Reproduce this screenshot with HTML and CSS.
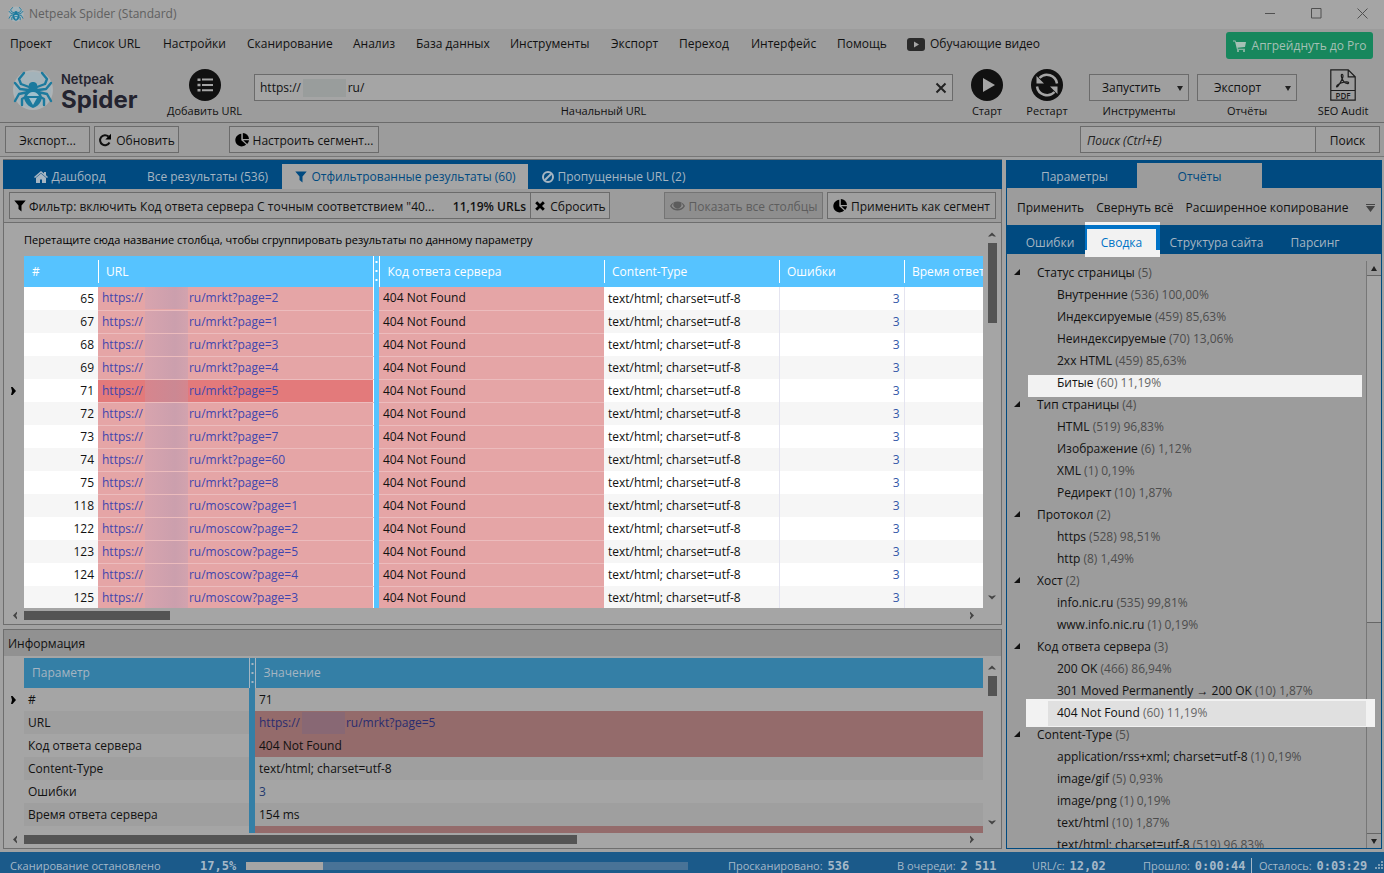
FILE: index.html
```html
<!DOCTYPE html>
<html lang="ru">
<head>
<meta charset="utf-8">
<title>Netpeak Spider (Standard)</title>
<link rel="stylesheet" href="styles.css">
</head>
<body>
<svg width="0" height="0" class="defs" aria-hidden="true">
  <symbol id="spider" viewBox="0 0 42 42">
    <circle cx="21" cy="21" r="20" fill="#adb4b7"/>
    <circle cx="21" cy="21" r="18" fill="#a3b3ba"/>
    <g fill="none" stroke="#1b7a9e" stroke-width="2.400" stroke-linecap="round" stroke-linejoin="round">
      <path d="M17 18 9 15 7 10 12 4M25 18l8-3 2-5-5-6M16 21l-8-1-5-6M26 21l8-1 5-6M16 23l-9 2-4 7M26 23l9 2 4 7M17 26l-7 4 0 6M25 26l7 4 0 6"/>
    </g>
    <path d="M21 13c-3 0-5 2-4 6-4 3-6 9-4 13 2 4 5 6 8 7 3-1 6-3 8-7 2-4 0-10-4-13 1-4-1-6-4-6z" fill="#1b7a9e"/>
    <path d="M21 23c-3 0-5 2-6 4h12c-1-2-3-4-6-4zM17 29h8l-4 7z" fill="#9fc0cc"/>
  </symbol>
  <symbol id="pie" viewBox="0 0 14 14"><path d="M6.300 .8v6.400l4.800 4.300A6.300 6.300 0 1 1 6.300.8z"/><path d="M7.800 0A6.200 6.200 0 0 1 14 6H7.800z"/><path d="M8.300 7.200H14a6 6 0 0 1-1.800 3.700z"/></symbol>
  <symbol id="funnel" viewBox="0 0 12 12"><path d="M.3.5h11.400L7.500 5.600V11.500L4.500 9V5.600z"/></symbol>
  <symbol id="cross" viewBox="0 0 12 12"><path d="M1.200 3.200 3.200 1.200 6 4l2.800-2.800 2 2L8 6l2.800 2.800-2 2L6 8l-2.800 2.800-2-2L4 6z"/></symbol>
  <symbol id="thin-cross" viewBox="0 0 12 12"><path d="M1.500 1.500l9 9M10.500 1.500l-9 9" stroke="#222" stroke-width="2"/></symbol>
  <symbol id="up" viewBox="0 0 8 5"><path d="M0 4.500 4 .5l4 4H6L4 3.500 2 4.500z"/></symbol>
  <symbol id="row-mark" viewBox="0 0 5 8"><path d="M0 0h1.500L5 4 1.500 8H0L1 4z"/></symbol>
</svg>

<header class="titlebar">
  <svg class="app-icon"><use href="#spider"/></svg>
  <span class="app-title">Netpeak Spider (Standard)</span>
  <div class="window-buttons">
    <button aria-label="Свернуть"><svg viewBox="0 0 11 11"><path d="M0 5.500h10"/></svg></button>
    <button aria-label="Развернуть"><svg viewBox="0 0 11 11"><path d="M.5.5h9.500v9.500H.5z"/></svg></button>
    <button aria-label="Закрыть"><svg viewBox="0 0 11 11"><path d="M.5.5l10 10M10.500.5l-10 10"/></svg></button>
  </div>
</header>

<nav class="menu">
  <a href="#">Проект</a><a href="#">Список URL</a><a href="#">Настройки</a><a href="#">Сканирование</a><a href="#">Анализ</a><a href="#">База данных</a><a href="#">Инструменты</a><a href="#">Экспорт</a><a href="#">Переход</a><a href="#">Интерфейс</a><a href="#">Помощь</a>
  <a href="#" class="video"><svg viewBox="0 0 18 13"><rect width="18" height="13" rx="3" fill="#2a2a2a"/><path d="M7 3.500v6l5-3z" fill="#a5a5a5"/></svg>Обучающие видео</a>
  <button class="upgrade"><svg viewBox="0 0 13 12"><path d="M0 .5h2.500l.4 1.500H13l-1 5-7.500.8.3 1H12v1H4L2 1.500H0z"/><circle cx="5" cy="11" r="1"/><circle cx="11" cy="11" r="1"/></svg>Апгрейднуть до Pro</button>
</nav>

<section class="toolbar">
  <div class="logo"><svg><use href="#spider"/></svg><div><span class="logo-small">Netpeak</span><span class="logo-big">Spider</span></div></div>
  <button class="tool add"><svg viewBox="0 0 32 32"><circle cx="16" cy="16" r="16" fill="#111"/><g fill="#a5a5a5"><path d="M8.500 9.500h3v2.500h-3zM8.500 14.700h3v2.500h-3zM8.500 20h3v2.500h-3zM13 9.500h11v2H13zM13 15h11v2H13zM13 20.200h11v2H13z"/></g></svg><span>Добавить URL</span></button>
  <div class="start-url">
    <div class="url-field"><input id="start" value="https://               ru/" aria-label="Начальный URL"><i class="mask"></i><button aria-label="Очистить"><svg viewBox="0 0 12 12"><use href="#thin-cross"/></svg></button></div>
    <label for="start">Начальный URL</label>
  </div>
  <button class="tool"><svg viewBox="0 0 32 32"><circle cx="16" cy="16" r="16" fill="#111"/><path d="M12 9v14l12-7z" fill="#a5a5a5"/></svg><span>Старт</span></button>
  <button class="tool"><svg viewBox="0 0 32 32"><circle cx="16" cy="16" r="16" fill="#111"/><g fill="none" stroke="#a5a5a5" stroke-width="2.500"><path d="M26 14.500A10.200 10.200 0 0 0 8.500 9M6 17.500a10.200 10.200 0 0 0 17.500 5.500"/></g><path d="M5.500 7v7.500H13zM26.500 25v-7.500H19z" fill="#a5a5a5"/></svg><span>Рестарт</span></button>
  <div class="drop"><button>Запустить<b></b></button><span>Инструменты</span></div>
  <div class="drop reports"><button>Экспорт<b></b></button><span>Отчёты</span></div>
  <button class="tool audit"><svg viewBox="0 0 26 32"><g fill="none" stroke="#1c1c1c" stroke-width="1.200"><path d="M.8.8h17.400l7 7v23.400H.8zM18.200.8v7h7M.8 21.500h24.400"/><path d="M12.500 5.500c-1.500-.5-1.500 1.500-.5 4 .8 2 2.500 4.500 5 5 2.500.3 2-1.700-.5-1.700-3.500 0-8 2-9.500 3.700-1.200 1.500.3 2 1.500 0 1.300-2 4.500-7.500 4.500-9.500 0-1-.2-1.400-.5-1.500z"/></g><text x="13" y="29.500" text-anchor="middle" class="pdf">PDF</text></svg><span>SEO Audit</span></button>
</section>

<section class="actions">
  <button class="btn export">Экспорт...</button>
  <button class="btn refresh"><svg viewBox="0 0 14 14"><path d="M11.500 9.500A5 5 0 1 1 10.500 3.500" fill="none" stroke="#111" stroke-width="2"/><path d="M13 .8v5.700H7.300z"/></svg>Обновить</button>
  <button class="btn segment"><svg viewBox="0 0 14 14"><use href="#pie"/></svg>Настроить сегмент...</button>
  <input class="search" placeholder="Поиск (Ctrl+E)" aria-label="Поиск">
  <button class="btn find">Поиск</button>
</section>

<main class="work">
  <div class="left">
    <section class="panel results">
      <div class="tabs">
        <button class="tab dash"><svg viewBox="0 0 14 12"><path d="M7 0 0 6l1 1 6-5 6 5 1-1-2-1.700V1h-2v1.500z"/><path d="M2 6.800V12h4V8.500h2V12h4V6.800L7 2.500z"/></svg>Дашборд</button>
        <button class="tab all">Все результаты (536)</button>
        <button class="tab filtered active"><svg viewBox="0 0 12 12"><use href="#funnel"/></svg>Отфильтрованные результаты (60)</button>
        <button class="tab skipped"><svg viewBox="0 0 12 12"><circle cx="6" cy="6" r="5" fill="none" stroke="#a5b5c2" stroke-width="2"/><path d="M9.300 2.700 2.700 9.300" stroke="#a5b5c2" stroke-width="2"/></svg>Пропущенные URL (2)</button>
      </div>
      <div class="filterbar">
        <button class="btn filter"><svg viewBox="0 0 12 12"><use href="#funnel"/></svg><span class="cond">Фильтр: включить Код ответа сервера С точным соответствием "40...</span><b>11,19% URLs</b></button>
        <button class="btn reset"><svg viewBox="0 0 12 12"><use href="#cross"/></svg>Сбросить</button>
        <button class="btn columns" disabled><svg viewBox="0 0 15 12"><path fill-rule="evenodd" d="M0 6c3-6 12-6 15 0-3 6-12 6-15 0zm4-3.500C2.800 3.500 2 5 1.500 6c2.500 4 9.500 4 12 0-.6-1-1.500-2.500-2.600-3.300a4 4 0 1 1-6.900-.2z"/><circle cx="7.500" cy="5" r="2.500"/></svg>Показать все столбцы</button>
        <button class="btn apply"><svg viewBox="0 0 14 14"><use href="#pie"/></svg>Применить как сегмент</button>
      </div>
      <div class="grid-area">
        <div class="grid-main">
          <p class="group-hint">Перетащите сюда название столбца, чтобы сгруппировать результаты по данному параметру</p>
          <table class="data">
            <colgroup><col class="c-mark"><col class="c-num"><col class="c-url"><col class="c-split"><col class="c-code"><col class="c-type"><col class="c-err"><col></colgroup>
            <thead><tr><td class="mark"></td><th>#</th><th>URL</th><td class="split"></td><th class="nosep">Код ответа сервера</th><th>Content-Type</th><th>Ошибки</th><th>Время ответа</th></tr></thead>
            <tbody>
            <tr><td class="mark"></td><td class="num">65</td><td class="url"><a href="#">https://<i class="mask"></i>ru/mrkt?page=2</a></td><td class="split"></td><td class="code">404 Not Found</td><td>text/html; charset=utf-8</td><td class="err">3</td><td></td></tr>
            <tr><td class="mark"></td><td class="num">67</td><td class="url"><a href="#">https://<i class="mask"></i>ru/mrkt?page=1</a></td><td class="split"></td><td class="code">404 Not Found</td><td>text/html; charset=utf-8</td><td class="err">3</td><td></td></tr>
            <tr><td class="mark"></td><td class="num">68</td><td class="url"><a href="#">https://<i class="mask"></i>ru/mrkt?page=3</a></td><td class="split"></td><td class="code">404 Not Found</td><td>text/html; charset=utf-8</td><td class="err">3</td><td></td></tr>
            <tr><td class="mark"></td><td class="num">69</td><td class="url"><a href="#">https://<i class="mask"></i>ru/mrkt?page=4</a></td><td class="split"></td><td class="code">404 Not Found</td><td>text/html; charset=utf-8</td><td class="err">3</td><td></td></tr>
            <tr class="current"><td class="mark"><svg viewBox="0 0 5 8"><use href="#row-mark"/></svg></td><td class="num">71</td><td class="url"><a href="#">https://<i class="mask"></i>ru/mrkt?page=5</a></td><td class="split"></td><td class="code">404 Not Found</td><td>text/html; charset=utf-8</td><td class="err">3</td><td></td></tr>
            <tr><td class="mark"></td><td class="num">72</td><td class="url"><a href="#">https://<i class="mask"></i>ru/mrkt?page=6</a></td><td class="split"></td><td class="code">404 Not Found</td><td>text/html; charset=utf-8</td><td class="err">3</td><td></td></tr>
            <tr><td class="mark"></td><td class="num">73</td><td class="url"><a href="#">https://<i class="mask"></i>ru/mrkt?page=7</a></td><td class="split"></td><td class="code">404 Not Found</td><td>text/html; charset=utf-8</td><td class="err">3</td><td></td></tr>
            <tr><td class="mark"></td><td class="num">74</td><td class="url"><a href="#">https://<i class="mask"></i>ru/mrkt?page=60</a></td><td class="split"></td><td class="code">404 Not Found</td><td>text/html; charset=utf-8</td><td class="err">3</td><td></td></tr>
            <tr><td class="mark"></td><td class="num">75</td><td class="url"><a href="#">https://<i class="mask"></i>ru/mrkt?page=8</a></td><td class="split"></td><td class="code">404 Not Found</td><td>text/html; charset=utf-8</td><td class="err">3</td><td></td></tr>
            <tr><td class="mark"></td><td class="num">118</td><td class="url"><a href="#">https://<i class="mask"></i>ru/moscow?page=1</a></td><td class="split"></td><td class="code">404 Not Found</td><td>text/html; charset=utf-8</td><td class="err">3</td><td></td></tr>
            <tr><td class="mark"></td><td class="num">122</td><td class="url"><a href="#">https://<i class="mask"></i>ru/moscow?page=2</a></td><td class="split"></td><td class="code">404 Not Found</td><td>text/html; charset=utf-8</td><td class="err">3</td><td></td></tr>
            <tr><td class="mark"></td><td class="num">123</td><td class="url"><a href="#">https://<i class="mask"></i>ru/moscow?page=5</a></td><td class="split"></td><td class="code">404 Not Found</td><td>text/html; charset=utf-8</td><td class="err">3</td><td></td></tr>
            <tr><td class="mark"></td><td class="num">124</td><td class="url"><a href="#">https://<i class="mask"></i>ru/moscow?page=4</a></td><td class="split"></td><td class="code">404 Not Found</td><td>text/html; charset=utf-8</td><td class="err">3</td><td></td></tr>
            <tr><td class="mark"></td><td class="num">125</td><td class="url"><a href="#">https://<i class="mask"></i>ru/moscow?page=3</a></td><td class="split"></td><td class="code">404 Not Found</td><td>text/html; charset=utf-8</td><td class="err">3</td><td></td></tr>
            </tbody>
          </table>
        </div>
        <div class="vscroll"><svg viewBox="0 0 8 5"><use href="#up"/></svg><i class="thumb"></i><svg class="down" viewBox="0 0 8 5"><use href="#up"/></svg></div>
      </div>
      <div class="hscroll"><svg class="to-left" viewBox="0 0 8 5"><use href="#up"/></svg><i class="thumb"></i><svg class="to-right" viewBox="0 0 8 5"><use href="#up"/></svg></div>
    </section>

    <section class="panel info">
      <h2>Информация</h2>
      <div class="grid-area">
        <div class="grid-main">
          <table class="data dim">
            <colgroup><col class="c-mark"><col class="c-param"><col class="c-split"><col></colgroup>
            <thead><tr><td class="mark"></td><th>Параметр</th><td class="split"></td><th class="nosep">Значение</th></tr></thead>
            <tbody>
            <tr><td class="mark"><svg viewBox="0 0 5 8"><use href="#row-mark"/></svg></td><td>#</td><td class="split"></td><td>71</td></tr>
            <tr><td class="mark"></td><td>URL</td><td class="split"></td><td class="url"><a href="#">https://<i class="mask"></i>ru/mrkt?page=5</a></td></tr>
            <tr><td class="mark"></td><td>Код ответа сервера</td><td class="split"></td><td class="code">404 Not Found</td></tr>
            <tr><td class="mark"></td><td>Content-Type</td><td class="split"></td><td>text/html; charset=utf-8</td></tr>
            <tr><td class="mark"></td><td>Ошибки</td><td class="split"></td><td class="blue">3</td></tr>
            <tr><td class="mark"></td><td>Время ответа сервера</td><td class="split"></td><td>154 ms</td></tr>
            <tr><td class="mark"></td><td></td><td class="split"></td><td class="code"></td></tr>
            </tbody>
          </table>
        </div>
        <div class="vscroll"><svg viewBox="0 0 8 5"><use href="#up"/></svg><i class="thumb"></i><svg class="down" viewBox="0 0 8 5"><use href="#up"/></svg></div>
      </div>
      <div class="hscroll"><svg class="to-left" viewBox="0 0 8 5"><use href="#up"/></svg><i class="thumb"></i><svg class="to-right" viewBox="0 0 8 5"><use href="#up"/></svg></div>
    </section>
  </div>

  <aside class="side">
    <div class="tabs">
      <button class="tab params">Параметры</button>
      <button class="tab reps active">Отчёты</button>
    </div>
    <div class="side-actions"><button>Применить</button><button>Свернуть всё</button><button>Расширенное копирование</button><svg viewBox="0 0 9 8"><path d="M0 0h9v1H0zM0 2h9L4.500 8z"/></svg></div>
    <div class="tabs sub">
      <button class="tab s1">Ошибки</button>
      <div class="spot"><button class="tab">Сводка</button></div>
      <button class="tab s3">Структура сайта</button>
      <button class="tab s4">Парсинг</button>
    </div>
    <div class="tree-area">
      <ul class="tree">
        <li class="g">Статус страницы <i>(5)</i></li>
        <li>Внутренние <i>(536) 100,00%</i></li>
        <li>Индексируемые <i>(459) 85,63%</i></li>
        <li>Неиндексируемые <i>(70) 13,06%</i></li>
        <li>2xx HTML <i>(459) 85,63%</i></li>
        <li class="lit">Битые <i>(60) 11,19%</i></li>
        <li class="g">Тип страницы <i>(4)</i></li>
        <li>HTML <i>(519) 96,83%</i></li>
        <li>Изображение <i>(6) 1,12%</i></li>
        <li>XML <i>(1) 0,19%</i></li>
        <li>Редирект <i>(10) 1,87%</i></li>
        <li class="g">Протокол <i>(2)</i></li>
        <li>https <i>(528) 98,51%</i></li>
        <li>http <i>(8) 1,49%</i></li>
        <li class="g">Хост <i>(2)</i></li>
        <li>info.nic.ru <i>(535) 99,81%</i></li>
        <li>www.info.nic.ru <i>(1) 0,19%</i></li>
        <li class="g">Код ответа сервера <i>(3)</i></li>
        <li>200 OK <i>(466) 86,94%</i></li>
        <li>301 Moved Permanently → 200 OK <i>(10) 1,87%</i></li>
        <li class="lit selected">404 Not Found <i>(60) 11,19%</i></li>
        <li class="g">Content-Type <i>(5)</i></li>
        <li>application/rss+xml; charset=utf-8 <i>(1) 0,19%</i></li>
        <li>image/gif <i>(5) 0,93%</i></li>
        <li>image/png <i>(1) 0,19%</i></li>
        <li>text/html <i>(10) 1,87%</i></li>
        <li>text/html; charset=utf-8 <i>(519) 96,83%</i></li>
      </ul>
      <div class="tree-scroll"><button aria-label="Вверх"><svg viewBox="0 0 6 5"><path d="M0 5 3 0l3 5z"/></svg></button><i></i><button class="dn" aria-label="Вниз"><svg viewBox="0 0 6 5"><path d="M0 0h6L3 5z"/></svg></button></div>
    </div>
  </aside>
</main>

<footer class="status">
  <span class="state">Сканирование остановлено</span>
  <b class="pct">17,5%</b>
  <div class="bar"><i></i></div>
  <span class="s-done">Просканировано: <b>536</b></span>
  <span class="s-queue">В очереди: <b>2 511</b></span>
  <span class="s-speed">URL/с: <b>12,02</b></span>
  <span class="s-gone">Прошло: <b>0:00:44</b></span>
  <span class="s-left">Осталось: <b>0:03:29</b></span>
  <svg class="grip" viewBox="0 0 9 9"><path d="M6 0h2v2H6zM6 3h2v2H6zM6 6h2v2H6zM3 3h2v2H3zM3 6h2v2H3zM0 6h2v2H0z"/></svg>
</footer>
</body>
</html>
```

FILE: styles.css
```css
* { box-sizing: border-box; }
body {
  margin: 0;
  height: 100vh;
  display: flex;
  flex-direction: column;
  overflow: hidden;
  background: #9c9c9c;
  color: #111;
  font: 12px/16px "Open Sans", "Noto Sans", sans-serif;
}
button, input { font: inherit; color: inherit; margin: 0; }
button { padding: 0; border: 0; background: none; white-space: nowrap; }
a { color: inherit; text-decoration: none; }
svg { display: block; flex: none; }
.defs { position: absolute; }

.titlebar {
  flex: none;
  height: 29px;
  display: flex;
  align-items: center;
  padding: 0 16px 2px 8px;
  background: #a5a5a5;
  color: #606060;
}
.app-icon { width: 16px; height: 16px; margin-right: 5px; }
.window-buttons { margin-left: auto; display: flex; gap: 35px; }
.window-buttons svg { width: 11px; height: 11px; fill: none; stroke: #505050; }

.menu {
  flex: none;
  height: 33px;
  display: grid;
  grid-template-columns: 63px 90px 84px 106px 63px 94px 101px 68px 72px 86px 70px 1fr 147px;
  padding: 0 11px 0 10px;
  line-height: 30px;
  white-space: nowrap;
}
.menu .video { display: flex; align-items: center; gap: 5px; height: 30px; }
.video svg { width: 18px; height: 13px; }
.upgrade {
  height: 27px;
  margin-top: 3px;
  display: flex;
  align-items: center;
  justify-content: center;
  gap: 6px;
  border-radius: 3px;
  background: #17875d;
  color: #a5c0b5;
}
.upgrade svg { width: 13px; height: 12px; fill: #a5c0b5; }

.toolbar {
  flex: none;
  height: 61px;
  display: flex;
  align-items: flex-start;
  padding: 7px 11px 0 12px;
  border-bottom: 1px solid #6b6b6b;
  font-size: 11px;
}
.toolbar > * { flex: none; }
.logo { display: flex; gap: 7px; width: 155px; }
.logo svg { width: 42px; height: 42px; }
.logo div { display: flex; flex-direction: column; font-family: Inter, sans-serif; color: #23232f; padding-top: 2px; }
.logo-small { font-size: 13px; line-height: 16px; font-weight: 600; }
.logo-big { font-size: 24px; line-height: 30px; font-weight: 700; margin-top: -2px; }
.tool { width: 60px; display: flex; flex-direction: column; align-items: center; gap: 2px; line-height: 16px; font-weight: 500; }
.tool svg { width: 32px; height: 32px; }
.tool.add { width: 75px; }
.start-url { flex: 1 1 0; margin: 5px 4px 0 12px; text-align: center; }
.start-url label { display: block; font-weight: 500; line-height: 16px; margin-top: 2px; }
.url-field { position: relative; display: flex; align-items: center; height: 27px; border: 1px solid #6b6b6b; background: #a5a5a5; }
.url-field input { flex: 1; width: 0; border: 0; background: none; padding: 0 5px; outline: 0; font-size: 12px; white-space: pre; }
.url-field .mask { position: absolute; left: 48px; top: 4px; height: 18px; background: #999d9c; }
.url-field svg { width: 12px; height: 12px; margin-right: 5px; }
.drop { width: 100px; margin: 5px 0 0 12px; display: flex; flex-direction: column; align-items: center; gap: 2px; font-weight: 500; }
.drop.reports { margin-left: 8px; }
.drop button { width: 100%; height: 27px; display: flex; align-items: center; justify-content: space-between; padding: 1px 5px 0 12px; border: 1px solid #6b6b6b; background: #9f9f9f; font-size: 12px; }
.drop.reports button { padding-left: 16px; }
.drop b { border: 3px solid transparent; border-top: 5px solid #222; border-bottom: 0; }
.tool.audit { margin-left: 16px; }
.tool.audit svg { width: 26px; height: 32px; }
.pdf { font: 600 8px "Open Sans", sans-serif; fill: #1c1c1c; }

.actions { flex: none; height: 34px; display: flex; padding: 3px 4px 0 5px; border-bottom: 1px solid #777; }
.btn { height: 27px; display: flex; align-items: center; justify-content: center; gap: 4px; padding: 2px 0 0; border: 1px solid #6b6b6b; background: #a0a0a0; }
.btn svg { width: 14px; height: 14px; margin-bottom: 2px; }
.actions .export { width: 85px; margin-right: 4px; }
.actions .refresh { width: 85px; margin-right: 50px; }
.actions .segment { width: 150px; }
.search { width: 236px; height: 27px; margin-left: auto; padding: 2px 6px 0; border: 1px solid #6b6b6b; background: #a3a3a3; font-style: italic; }
.search::placeholder { color: #222; opacity: 1; }
.actions .find { width: 65px; margin-left: -1px; }

.work { flex: 1; min-height: 0; display: grid; grid-template-columns: minmax(0, 1fr) 376px; gap: 4px; padding: 2px 2px 3px 3px; background: #a2a2a2; }
.left { display: flex; flex-direction: column; gap: 4px; min-height: 0; }
.panel { border: 1px solid #6e6e6e; background: #a5a5a5; display: flex; flex-direction: column; min-height: 0; }
.results { flex: none; }
.info { flex: 1; }
.tabs { flex: none; height: 29px; display: flex; padding-top: 4px; background: #004a80; }
.results .tabs { margin: 0 -1px; }
.tab { display: flex; align-items: center; justify-content: center; gap: 3px; color: #a5b5c2; height: 25px; }
.tab svg { width: 14px; height: 12px; fill: currentColor; }
.tab.active { background: #a5a5a5; color: #004a80; }
.dash { width: 134px; }
.all { width: 145px; padding-right: 4px; }
.filtered { width: 246px; }
.skipped { width: 170px; }
.filterbar { flex: none; height: 34px; display: flex; padding: 3px 5px; border-bottom: 1px solid #6e6e6e; background: #9c9c9c; }
.filter { width: 522px; padding: 2px 4px 0; justify-content: flex-start; gap: 3px; }
.filter b { margin-left: auto; font-weight: 600; }
.filter svg, .reset svg { width: 12px; height: 12px; }
.reset { width: 80px; margin-left: -1px; }
.columns { width: 159px; margin-left: auto; background: #8e8e8e; color: #5d5d5d; fill: #5d5d5d; border-color: #747474; }
.columns svg { width: 15px; height: 12px; }
.apply { width: 169px; margin-left: 4px; }

.grid-area { flex: 1; display: flex; min-height: 0; }
.grid-main { flex: 1; min-width: 0; overflow: hidden; }
.results .grid-main { height: 385px; flex: 1 1 0; }
.group-hint { margin: 0; padding: 9px 20px 8px; font-size: 11px; line-height: 16px; color: #000; white-space: nowrap; }
.data { width: 100%; table-layout: fixed; border-collapse: collapse; line-height: 16px; color: #111; }
.data td, .data th { height: 23px; padding: 0 4px; text-align: left; white-space: nowrap; overflow: hidden; }
.c-mark { width: 20px; } .c-num { width: 74px; } .c-url { width: 275px; } .c-split { width: 6px; }
.c-code { width: 225px; } .c-type { width: 175px; } .c-err { width: 125px; } .c-param { width: 225px; }
.data thead th { height: 31px; padding: 0 8px; font-weight: 500; color: #fff; background: linear-gradient(#fff, #fff) 0 50% / 1px 23px no-repeat #56c3ff; }
.data thead th:nth-child(2), .data thead th.nosep { background: #56c3ff; }
.data tbody td { background: #fff; }
.data tbody tr:nth-child(even) td { background: #f6f6f6; }
.data tbody td.mark, .data tbody tr:nth-child(even) td.mark { background: #a5a5a5; padding: 0 0 0 7px; }
.mark svg { width: 5px; height: 8px; fill: #000; }
.data .num, .data .err { text-align: right; }
.data .err, .data .blue { color: #3458a8; }
.data td.err { border-left: 1px solid #e4e4f0; border-right: 1px solid #e4e4f0; }
.data tbody td.code, .data tbody td.url, .data tbody tr:nth-child(even) td.code, .data tbody tr:nth-child(even) td.url { background: #e5a5a6; border-bottom: 1px solid #ecbcbd; color: #111; }
.data tbody td.url { border-right: 1px solid #fff; }
.data tbody td.url a { display: flex; align-items: center; height: 22px; color: #4146ae; }
.data tbody tr.current td.url { background: #e37a7b; }
.mask { flex: none; width: 43px; height: 22px; background: linear-gradient(90deg, #d8a4ae, #cb9fad 70%, #d3a3ae); }
.data .mask { margin: 0 1px 0 2px; }
.current .mask { background: linear-gradient(90deg, #d7858d, #cb8893 70%, #d5868e); }
.data tbody tr .split.split { background: #56c3ff; padding: 0; }
.data thead .split { background: radial-gradient(circle at 3px 4px, #fff 1px, transparent 1px) 0 2px / 7px 9px #56c3ff; border-left: 1px solid #fff; border-right: 1px solid #fff; }

.vscroll { flex: none; width: 18px; display: flex; flex-direction: column; align-items: center; padding: 9px 0 8px; fill: #444; }
.vscroll svg { width: 8px; height: 5px; }
.vscroll .thumb { width: 9px; height: 80px; margin-top: 6px; background: #545454; }
.vscroll .down { margin-top: auto; transform: rotate(180deg); }
.hscroll { flex: none; height: 16px; display: flex; align-items: center; padding: 0 25px 2px 7px; fill: #444; }
.hscroll svg { width: 8px; height: 5px; }
.hscroll .thumb { width: 146px; height: 9px; margin-left: 5px; background: #545454; }
.to-left { transform: rotate(-90deg); }
.to-right { transform: rotate(90deg); margin-left: auto; }

.info h2 { flex: none; margin: 0 0 2px; padding: 6px 4px 4px; font-size: 12px; line-height: 16px; font-weight: 400; background: #919191; }
.info .vscroll { padding-top: 7px; }
.info .vscroll .thumb { height: 20px; }
.info .hscroll { height: 15px; }
.info .hscroll .thumb { width: 553px; }
.dim thead th, .dim thead th.nosep, .dim thead th:nth-child(2) { height: 30px; background: #347fa6; color: #a5b5c2; }
.dim tbody td { background: #a5a5a5; }
.dim tbody tr:nth-child(even) td { background: #9f9f9f; }
.dim tbody tr td.code.code, .dim tbody tr td.url.url { background: #946b6b; border: 0; }
.dim tbody td.url.url a { color: #2a2d70; }
.dim .mask { background: #886874; }
.dim td.blue { color: #22396d; }
.dim thead tr .split.split { background: radial-gradient(circle at 3px 4px, #a5b5c2 1px, transparent 1px) 0 2px / 7px 9px #347fa6; border-color: #a5b5c2; }
.dim tbody tr .split.split { background: #347fa6; border: 0; }

.side { min-height: 0; display: flex; flex-direction: column; margin-top: 1px; border: 1px solid #004a80; border-top: 0; background: #9c9c9c; }
.side .tabs { height: 28px; padding-top: 3px; }
.side .tab { padding-top: 2px; }
.side .tab.active { background: #9c9c9c; }
.params { width: 130px; padding-left: 5px; }
.reps { width: 125px; }
.side-actions { flex: none; height: 37px; display: flex; align-items: center; gap: 12px; padding: 2px 6px 0 10px; }
.side-actions svg { width: 9px; height: 8px; margin-left: auto; fill: #444; }
.side .tabs.sub { height: 29px; padding-top: 4px; }
.s1 { width: 78px; padding-left: 8px; }
.spot { width: 75px; height: 35px; margin: -7px 0 -3px; padding: 4px 4px 0 2px; border-top: 3px solid #f2f2f2; background: linear-gradient(#0072c6, #0072c6) 0 0 / 100% 25px no-repeat #f2f2f2; z-index: 1; }
.spot .tab { width: 69px; height: 28px; padding-bottom: 3px; background: #f2f2f2; color: #0072c6; }
.s3 { width: 113px; }
.s4 { width: 84px; }
.tree-area { flex: 1; min-height: 0; display: flex; }
.tree { position: relative; z-index: 1; flex: 1; min-width: 0; margin: 0 -9px 0 0; padding: 8px 0 0; list-style: none; overflow: hidden; }
.tree li { position: relative; z-index: 0; height: 22px; line-height: 22px; padding-left: 50px; white-space: nowrap; }
.tree i { font-style: normal; color: #4c4c4c; }
.tree .g { padding-left: 30px; }
.tree .g::before { content: ""; position: absolute; left: 7px; top: 7px; border: 3px solid #111; border-left-color: transparent; border-top-color: transparent; }
.tree .lit::before { content: ""; position: absolute; z-index: -1; left: 21px; right: 13px; top: 3px; height: 22px; background: #f2f2f2; }
.tree .lit.selected { z-index: 1; }
.tree-area .tree .selected::before { left: 19px; right: 0; top: -3px; height: 25px; border: solid #f2f2f2; border-width: 2px 9px 1px 22px; background: #e0e0e0; }
.tree .lit i { color: #666; }
.tree-scroll { flex: none; width: 15px; margin-top: 7px; display: flex; flex-direction: column; border-left: 1px solid #777; }
.tree-scroll button { height: 15px; display: grid; place-items: center; border-bottom: 1px solid #666; }
.tree-scroll svg { width: 6px; height: 5px; fill: #222; }
.tree-scroll i { flex: 0 0 347px; background: #a5a5a5; border-bottom: 1px solid #666; }
.tree-scroll .dn { margin-top: auto; border-top: 1px solid #666; border-bottom: 0; }

.status { flex: none; height: 21px; display: flex; align-items: center; padding: 6px 0 0 10px; background: #1b5a8a; color: #a5b8c8; font-size: 11px; white-space: nowrap; }
.status b { font: 12px/16px "DejaVu Sans Mono", monospace; font-weight: 700; }
.status span b { margin-left: 2px; }
.status > * { flex: none; }
.state { width: 190px; }
.pct { width: 46px; }
.bar { width: 442px; height: 8px; background: #497397; }
.bar i { display: block; width: 77px; height: 8px; background: #a5a5a5; }
.s-done { margin-left: auto; width: 169px; }
.s-queue { width: 135px; }
.s-speed { width: 111px; }
.s-gone { width: 109px; border-right: 1px solid #a5b8c8; line-height: 10px; }
.s-left { width: 123px; padding-left: 7px; }
.grip { width: 9px; height: 9px; fill: #7fa0b8; }
```
